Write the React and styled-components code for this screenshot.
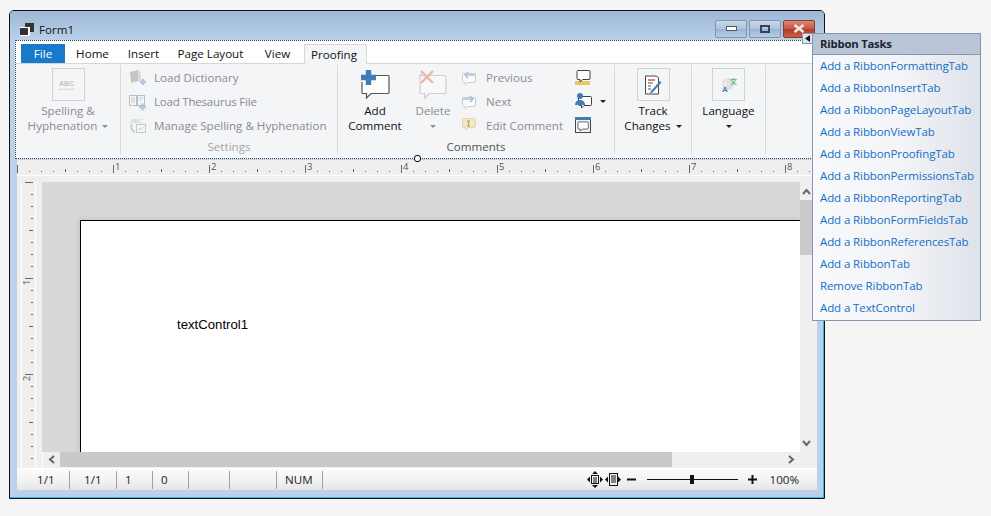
import React from "react";
import styled, { createGlobalStyle } from "styled-components";

const GlobalStyle = createGlobalStyle`
  html, body { margin: 0; padding: 0; background: #f5f5f5; }
  body { width: 991px; height: 516px; overflow: hidden; font-family: "Open Sans", "Liberation Sans", sans-serif; }
`;

const Screen = styled.div`
  position: relative;
  width: 991px;
  height: 516px;
  padding: 10px 0 0 9px;
  box-sizing: border-box;
`;

const Win = styled.div`
  width: 816px;
  height: 489px;
  box-sizing: border-box;
  border: 1px solid #111;
  border-radius: 5px 5px 0 0;
  background: #b9d1ea;
  box-shadow: inset -1px -1px 0 #35b5d8;
  padding: 0 7px 8px 7px;
  display: flex;
  flex-direction: column;
`;

const TitleBar = styled.div`
  height: 29px;
  flex: none;
  box-sizing: border-box;
  margin: 0 -7px;
  padding: 8px 9px 0 10px;
  border-radius: 4px 4px 0 0;
  background: linear-gradient(#9cb7d5, #b9d1ea);
  display: flex;
  align-items: center;
  font-size: 11.6px;
  color: #111;
`;

const TitleText = styled.span`
  margin-left: 5px;
`;

const WinButtons = styled.div`
  margin-left: auto;
  margin-top: -2px;
  display: flex;
  gap: 2px;
`;

const WinButton = styled.div`
  width: 32px;
  height: 18px;
  box-sizing: border-box;
  border: 1px solid ${p => (p.$close ? "#8a3a2c" : "#7f93ad")};
  border-radius: 2px;
  background: ${p =>
    p.$close
      ? "linear-gradient(#d98a78, #c45a45 48%, #b23a28 52%, #c9604a)"
      : "linear-gradient(#c9d8e9, #afc4dc 48%, #9bb4d1 52%, #b8cde4)"};
  display: flex;
  align-items: center;
  justify-content: center;
`;

const RibbonBox = styled.div`
  height: 119px;
  flex: none;
  box-sizing: border-box;
  margin-left: -2px;
  border-top: 1px dotted #444;
  border-left: 1px dotted #444;
  border-bottom: 1px dotted #444;
  background: #f4f5f7;
  display: flex;
  flex-direction: column;
  position: relative;
`;

const TabStrip = styled.div`
  height: 23px;
  flex: none;
  box-sizing: border-box;
  padding: 3px 0 0 5px;
  background: #fff;
  border-bottom: 1px solid #d6d6d6;
  display: flex;
  font-size: 11.6px;
  color: #111;
`;

const Tab = styled.div`
  height: ${p => (p.$active ? 20 : 19)}px;
  width: ${p => p.$w}px;
  box-sizing: border-box;
  margin-left: ${p => (p.$active ? 3 : 0)}px;
  padding-right: ${p => (p.$active ? 3 : 0)}px;
  display: flex;
  align-items: center;
  justify-content: center;
  background: ${p => (p.$file ? "#1979ca" : p.$active ? "#f4f5f7" : "#fff")};
  color: ${p => (p.$file ? "#fff" : "#111")};
  border: ${p => (p.$active ? "1px solid #d6d6d6" : "none")};
  border-bottom: none;
`;

const Groups = styled.div`
  flex: 1;
  display: flex;
  padding-top: 1px;
`;

const Group = styled.div`
  width: ${p => p.$w}px;
  height: 89px;
  box-sizing: border-box;
  border-right: 1px solid #d9d9d9;
  flex: none;
  display: flex;
  flex-direction: column;
`;

const GroupBody = styled.div`
  height: 72px;
  flex: none;
  display: flex;
`;

const GroupLabel = styled.div`
  text-align: center;
  font-size: 11.6px;
  line-height: 14px;
  color: ${p => (p.$off ? "#a6a6a6" : "#555")};
  margin-top: 3px;
`;

const BigButton = styled.div`
  width: ${p => p.$w}px;
  flex: none;
  padding-top: 3px;
  display: flex;
  flex-direction: column;
  align-items: center;
  font-size: 11.6px;
  line-height: 15px;
  text-align: center;
  color: ${p => (p.$off ? "#8b8b94" : "#111")};
`;

const IconFrame = styled.div`
  width: 33px;
  height: 33px;
  box-sizing: border-box;
  border: ${p => (p.$plain ? "none" : "1px solid #d2d2d2")};
  margin-bottom: 2px;
  display: flex;
  align-items: center;
  justify-content: center;
  flex: none;
`;

const Caret = styled.span`
  display: inline-block;
  width: 0;
  height: 0;
  border-left: 3px solid transparent;
  border-right: 3px solid transparent;
  border-top: 3px solid ${p => (p.$off ? "#8b8b94" : "#222")};
  vertical-align: middle;
  margin-left: ${p => p.$gap ?? 5}px;
`;

const SmallList = styled.div`
  display: flex;
  flex-direction: column;
  padding-top: ${p => p.$top ?? 1}px;
  margin-left: ${p => p.$left}px;
`;

const SmallRow = styled.div`
  height: 24px;
  display: flex;
  align-items: center;
  font-size: 11.6px;
  letter-spacing: ${p => p.$track ?? 0}px;
  color: #8b8b94;
  white-space: nowrap;
`;

const SmallIcon = styled.div`
  width: 25px;
  height: 18px;
  flex: none;
  display: flex;
  align-items: center;
`;

const RulerBar = styled.div`
  height: 16px;
  flex: none;
  margin-top: 1px;
  background: #efefef;
  border-bottom: 1px solid #fff;
  box-sizing: border-box;
  line-height: 0;
`;

const Body = styled.div`
  height: 293px;
  flex: none;
  background: #efefef;
  display: flex;
  padding: 6px 0 0 4px;
  box-sizing: border-box;
  border-bottom: 1px solid #fff;
`;

const VRuler = styled.div`
  width: 15px;
  box-sizing: border-box;
  border-left: 1px solid #fff;
  border-right: 1px solid #fff;
  flex: none;
  line-height: 0;
  margin-right: 6px;
`;

const DocGrid = styled.div`
  width: 775px;
  display: grid;
  grid-template-columns: 758px 17px;
  grid-template-rows: 270px 16px;
`;

const DocArea = styled.div`
  background: #d8d8d8;
  padding: 38px 0 0 38px;
  overflow: hidden;
`;

const Sheet = styled.div`
  height: 100%;
  background: #fff;
  box-sizing: border-box;
  border-top: 1px solid #000;
  border-left: 1px solid #000;
  box-shadow: -2px -2px 4px rgba(0, 0, 0, 0.08);
  padding: 96px 0 0 96px;
  font-family: "Liberation Sans", Arial, sans-serif;
  font-size: 13.2px;
  line-height: 15px;
  color: #000;
`;

const VScroll = styled.div`
  background: #efefef;
  display: flex;
  flex-direction: column;
  align-items: flex-start;
`;

const VThumb = styled.div`
  width: 13px;
  height: 55px;
  background: #cbcbcb;
`;

const ArrowCell = styled.div`
  height: ${p => p.$h}px;
  width: ${p => p.$w}px;
  flex: none;
  display: flex;
  align-items: center;
  justify-content: center;
`;

const VGap = styled.div`
  flex: 1;
`;

const HScroll = styled.div`
  background: #efefef;
  display: flex;
  align-items: stretch;
  padding-left: 1px;
  box-shadow: inset 1px 0 0 #fff;
`;

const HThumb = styled.div`
  width: 612px;
  height: 15px;
  background: #c9c9c9;
`;

const Corner = styled.div`
  background: #efefef;
`;

const StatusBar = styled.div`
  height: 21px;
  flex: none;
  background: linear-gradient(#fbfbfb, #f3f3f3 50%, #e6e6e6);
  display: flex;
  align-items: center;
  font-size: 11.6px;
  color: #222;
`;

const StatusCell = styled.div`
  width: ${p => p.$w}px;
  height: 18px;
  box-sizing: border-box;
  flex: none;
  padding-left: ${p => p.$pad}px;
  border-right: 1px solid #a0a0a0;
  line-height: 18px;
`;

const StatusRight = styled.div`
  margin-left: auto;
  padding-right: 18px;
  display: flex;
  align-items: center;
`;

const Zoom = styled.span`
  margin-left: 13px;
`;

const Slider = styled.div`
  width: 91px;
  height: 1px;
  margin: 0 10px 0 11px;
  background: #111;
  position: relative;
`;

const SliderThumb = styled.div`
  position: absolute;
  left: 43px;
  top: -4px;
  width: 4px;
  height: 9px;
  background: #111;
`;

const MinusIcon = styled.svg`
  margin-left: 6px;
`;

const SizeHandle = styled.div`
  position: absolute;
  left: 398px;
  bottom: -4px;
  width: 7px;
  height: 7px;
  box-sizing: border-box;
  border: 1px solid #000;
  border-radius: 3px;
  background: #fff;
`;

const SmartTag = styled.div`
  position: absolute;
  left: 802px;
  top: 33px;
  width: 11px;
  height: 11px;
  box-sizing: border-box;
  background: #dfe3ea;
  border: 1px solid #8496b0;
  display: flex;
  align-items: center;
  justify-content: center;
`;

const TasksPanel = styled.div`
  position: absolute;
  left: 812px;
  top: 33px;
  width: 169px;
  height: 288px;
  box-sizing: border-box;
  border: 1px solid #8496b0;
  background: linear-gradient(90deg, #f8f9fb, #f4f5f8 50%, #dee2e9);
`;

const TasksHeader = styled.div`
  height: 21px;
  box-sizing: border-box;
  background: #b9c5d7;
  border-bottom: 1px solid #8496b0;
  padding-left: 7px;
  font-size: 11.3px;
  letter-spacing: -0.2px;
  font-weight: 700;
  line-height: 20px;
  color: #1c2433;
`;

const TasksList = styled.div`
  padding: 0 0 0 7px;
  display: flex;
  flex-direction: column;
`;

const TaskLink = styled.a`
  height: 22px;
  font-size: 11.5px;
  letter-spacing: -0.1px;
  line-height: 21px;
  color: #126fc8;
  white-space: nowrap;
`;

const Frame = ({ children, w = 24, h = 24, ...rest }) => (
  <svg width={w} height={h} viewBox={`0 0 ${w} ${h}`} fill="none" {...rest}>
    {children}
  </svg>
);

const Bubble = ({ c = "#444", fill = "#fff" }) => (
  <path
    d="M1.500 0.500h11a1 1 0 0 1 1 1v7a1 1 0 0 1-1 1H6l-2.500 2.500v-2.500H1.500a1 1 0 0 1-1-1v-7a1 1 0 0 1 1-1z"
    stroke={c}
    fill={fill}
  />
);

const WindowIcon = () => (
  <Frame w={14} h={13}>
    <rect x="5" y="0" width="9" height="9" fill="#333" />
    <rect x="0" y="4" width="10" height="9" fill="#fff" />
    <rect x="0" y="5" width="8" height="7" fill="#333" />
  </Frame>
);

const AbcIcon = () => (
  <Frame w={20} h={14}>
    <text x="1" y="8" fontFamily="Liberation Sans" fontWeight="700" fontSize="7" fill="#c4c4c4">ABC</text>
    <path d="M1 12l2-1.500 2 1.500 2-1.500 2 1.500 2-1.500 2 1.500 2-1.500 2 1.500" stroke="#e9bdb5" strokeWidth="0.8" />
  </Frame>
);

const DictIcon = () => (
  <Frame w={18} h={18}>
    <path d="M1 3l8-2v11l-7 2z" fill="#c6c6c6" />
    <path d="M9 1l3 2v9l-3 1z" fill="#dcdcdc" />
    <path d="M11 13h6M14 10v6" stroke="#aec6de" strokeWidth="2.400" />
  </Frame>
);

const ThesaurusIcon = () => (
  <Frame w={18} h={18}>
    <rect x="0.500" y="2.500" width="7" height="10" stroke="#bdbdbd" />
    <rect x="8.500" y="2.500" width="7" height="10" stroke="#bdbdbd" />
    <path d="M2 5h4M2 7h4M2 9h4M10 5h4M10 7h2" stroke="#c9c9c9" />
    <path d="M10 14h7M13.500 10.500v7" stroke="#aec6de" strokeWidth="2.400" />
  </Frame>
);

const ManageIcon = () => (
  <Frame w={18} h={18}>
    <text x="1" y="7" fontFamily="Liberation Sans" fontSize="6" fill="#c9c9c9">ABC</text>
    <path d="M3 8c-2 3 0 7 3 8" stroke="#cfcfcf" strokeWidth="2" />
    <rect x="7.500" y="8.500" width="9" height="8" stroke="#b6d4b6" fill="#f4f7f4" />
    <path d="M9.500 12l2 2 3-3" stroke="#b6d4b6" />
  </Frame>
);

const AddCommentIcon = () => (
  <Frame w={30} h={30}>
    <path
      d="M6 5.500h22a1 1 0 0 1 1 1v16a1 1 0 0 1-1 1H11l-4.500 4.500v-4.500H3a1 1 0 0 1-1-1V12"
      stroke="#555"
      fill="#fff"
      strokeWidth="1.200"
    />
    <path d="M1 7.500h15M8.500 0v15" stroke="#3f7cb8" strokeWidth="5.400" />
  </Frame>
);

const DeleteCommentIcon = () => (
  <Frame w={30} h={30}>
    <path
      d="M3 5.500h24a1 1 0 0 1 1 1v16a1 1 0 0 1-1 1H11l-4.500 4.500v-4.500H3a1 1 0 0 1-1-1v-17a1 1 0 0 1 1-1z"
      stroke="#cfcfcf"
      fill="#f8f8f8"
      strokeWidth="1.200"
    />
    <path d="M3 1l12 12M15 1L3 13" stroke="#eeb3a8" strokeWidth="2.400" />
  </Frame>
);

const PrevIcon = ({ flip }) => (
  <Frame w={16} h={16}>
    <g transform="translate(1 3)">
      <Bubble c="#c9c9c9" fill="#fafafa" />
    </g>
    <path d={flip ? "M2 5h10M9 2l3 3-3 3" : "M14 5H4M7 2L4 5l3 3"} stroke="#a8c3de" strokeWidth="1.600" />
  </Frame>
);

const EditCommentIcon = () => (
  <Frame w={16} h={16}>
    <g transform="translate(1 1)">
      <Bubble c="#e3d5b0" fill="#f3e6c2" />
    </g>
    <path d="M6 4h3M7.500 4v5M6 9h3" stroke="#a99a70" />
  </Frame>
);

const ShowIcon = () => (
  <Frame w={16} h={15}>
    <rect x="0" y="11" width="15" height="4" fill="#eec468" />
    <g transform="translate(1.500 0)">
      <Bubble />
    </g>
  </Frame>
);

const AuthorIcon = () => (
  <Frame w={17} h={16}>
    <g transform="translate(3 3)">
      <Bubble />
    </g>
    <circle cx="5" cy="3" r="3" fill="#3f7cb8" />
    <path d="M0 12c0-3 2-5 5-5s5 2 5 5z" fill="#3f7cb8" />
  </Frame>
);

const PaneIcon = () => (
  <Frame w={16} h={16}>
    <rect x="0.500" y="1" width="15" height="14.500" stroke="#444" />
    <rect x="0" y="0" width="16" height="3" fill="#3f7cb8" />
    <g transform="translate(2.500 4.500) scale(0.8)">
      <Bubble />
    </g>
  </Frame>
);

const TrackIcon = () => (
  <Frame w={18} h={20}>
    <path d="M1.500 1h11l2 2v16h-13z" stroke="#444" fill="#fff" />
    <path d="M4 5h7" stroke="#d0503c" strokeWidth="1.400" />
    <path d="M4 8h5M4 11h3M4 14h3" stroke="#555" />
    <path d="M7 16l9-10 1.500 1.500-9 10-2.500 1z" fill="#3f7cb8" />
  </Frame>
);

const LanguageIcon = () => (
  <Frame w={20} h={20}>
    <circle cx="9" cy="9" r="6" fill="#dedede" />
    <path d="M8 3c-2 4-2 8 0 12M3 9h12" stroke="#f2f2f2" />
    <text x="3" y="17" fontFamily="Liberation Sans" fontWeight="700" fontSize="8" fill="#3f7cb8">A</text>
    <text x="11" y="9" fontFamily="Noto Sans CJK SC" fontWeight="700" fontSize="7" fill="#55b865">文</text>
  </Frame>
);

const Chevron = ({ d }) => (
  <Frame w={9} h={7}>
    <path d={d} stroke="#666" strokeWidth="2" />
  </Frame>
);

const HRuler = () => {
  const ticks = [];
  for (let i = 0; i <= 66; i++) {
    const x = i * 12 + 0.5;
    if (i % 8 === 0) ticks.push(<path key={i} d={`M${x} 5V13`} stroke="#666" />);
    else if (i % 4 === 0) ticks.push(<path key={i} d={`M${x} 9V12`} stroke="#666" />);
    else ticks.push(<path key={i} d={`M${x} 11V12`} stroke="#666" />);
  }
  const labels = [1, 2, 3, 4, 5, 6, 7, 8].map(n => (
    <text key={n} x={n * 96 + 2} y="10.200" fontSize="9.500" fontFamily="Open Sans" fill="#555">{n}</text>
  ));
  return (
    <svg width="800" height="15">
      {ticks}
      {labels}
    </svg>
  );
};

const VRulerDrawing = () => {
  const ticks = [];
  for (let i = 0; i <= 23; i++) {
    const y = i * 12 + 0.5;
    if (i % 8 === 0) ticks.push(<path key={i} d={`M3 ${y}H11`} stroke="#666" />);
    else if (i % 4 === 0) ticks.push(<path key={i} d={`M7 ${y}H11`} stroke="#666" />);
    else ticks.push(<path key={i} d={`M9 ${y}H11`} stroke="#666" />);
  }
  const labels = [1, 2].map(n => (
    <text
      key={n}
      transform={`translate(8 ${n * 96 + 7}) rotate(-90)`}
      fontSize="9"
      fontFamily="Open Sans"
      fill="#555"
    >
      {n}
    </text>
  ));
  return (
    <svg width="13" height="286">
      {ticks}
      {labels}
    </svg>
  );
};

const ViewIcons = () => (
  <Frame w={34} h={17}>
    <path d="M0 8.500l3-3v6zM16 8.500l-3-3v6zM8 0l-3 3h6zM8 17l-3-3h6zM18 8.500l3-3v6zM34 8.500l-3-3v6z" fill="#111" />
    <rect x="4.500" y="4.500" width="7" height="8" stroke="#111" />
    <path d="M6 7h4M6 9h4M6 11h4" stroke="#111" />
    <rect x="22.500" y="2.500" width="8" height="12" stroke="#111" />
    <path d="M24 5h5M24 7h5M24 9h5M24 11h5" stroke="#111" />
  </Frame>
);

const taskLinks = [
  "Add a RibbonFormattingTab",
  "Add a RibbonInsertTab",
  "Add a RibbonPageLayoutTab",
  "Add a RibbonViewTab",
  "Add a RibbonProofingTab",
  "Add a RibbonPermissionsTab",
  "Add a RibbonReportingTab",
  "Add a RibbonFormFieldsTab",
  "Add a RibbonReferencesTab",
  "Add a RibbonTab",
  "Remove RibbonTab",
  "Add a TextControl",
];

const statusCells = [
  { w: 53, pad: 20, text: "1/1" },
  { w: 47, pad: 14, text: "1/1" },
  { w: 36, pad: 8, text: "1" },
  { w: 36, pad: 8, text: "0" },
  { w: 41, pad: 0, text: "" },
  { w: 47, pad: 0, text: "" },
  { w: 46, pad: 8, text: "NUM" },
];

export default function App() {
  return (
    <Screen>
      <GlobalStyle />
      <Win>
        <TitleBar>
          <WindowIcon />
          <TitleText>Form1</TitleText>
          <WinButtons>
            <WinButton>
              <Frame w={11} h={5}>
                <rect x="0.500" y="0.500" width="10" height="4" fill="#fff" stroke="#4b5b70" />
              </Frame>
            </WinButton>
            <WinButton>
              <Frame w={10} h={8}>
                <rect x="1" y="1" width="8" height="6" fill="none" stroke="#33445a" strokeWidth="2" />
              </Frame>
            </WinButton>
            <WinButton $close>
              <Frame w={12} h={9}>
                <path d="M1.500 1l9 7M10.500 1l-9 7" stroke="#f1e6e3" strokeWidth="2.600" />
              </Frame>
            </WinButton>
          </WinButtons>
        </TitleBar>

        <RibbonBox>
          <TabStrip>
            <Tab $w={44} $file>File</Tab>
            <Tab $w={55}>Home</Tab>
            <Tab $w={47}>Insert</Tab>
            <Tab $w={87}>Page Layout</Tab>
            <Tab $w={47}>View</Tab>
            <Tab $w={63} $active>Proofing</Tab>
          </TabStrip>
          <Groups>
            <Group $w={105}>
              <GroupBody>
                <BigButton $w={104} $off>
                  <IconFrame><AbcIcon /></IconFrame>
                  <div>Spelling &amp;</div>
                  <div>Hyphenation<Caret $off /></div>
                </BigButton>
              </GroupBody>
            </Group>
            <Group $w={217}>
              <GroupBody>
                <SmallList $left={8}>
                  <SmallRow><SmallIcon><DictIcon /></SmallIcon>Load Dictionary</SmallRow>
                  <SmallRow $track={-0.25}><SmallIcon><ThesaurusIcon /></SmallIcon>Load Thesaurus File</SmallRow>
                  <SmallRow><SmallIcon><ManageIcon /></SmallIcon>Manage Spelling &amp; Hyphenation</SmallRow>
                </SmallList>
              </GroupBody>
              <GroupLabel $off>Settings</GroupLabel>
            </Group>
            <Group $w={277}>
              <GroupBody>
                <BigButton $w={74}>
                  <IconFrame $plain><AddCommentIcon /></IconFrame>
                  <div>Add</div>
                  <div>Comment</div>
                </BigButton>
                <BigButton $w={42} $off>
                  <IconFrame $plain><DeleteCommentIcon /></IconFrame>
                  <div>Delete</div>
                  <div><Caret $off $gap={0} /></div>
                </BigButton>
                <SmallList $left={7}>
                  <SmallRow><SmallIcon><PrevIcon /></SmallIcon>Previous</SmallRow>
                  <SmallRow><SmallIcon><PrevIcon flip /></SmallIcon>Next</SmallRow>
                  <SmallRow><SmallIcon><EditCommentIcon /></SmallIcon>Edit Comment</SmallRow>
                </SmallList>
                <SmallList $left={12} $top={0}>
                  <SmallRow><ShowIcon /></SmallRow>
                  <SmallRow><AuthorIcon /><Caret $gap={8} /></SmallRow>
                  <SmallRow><PaneIcon /></SmallRow>
                </SmallList>
              </GroupBody>
              <GroupLabel>Comments</GroupLabel>
            </Group>
            <Group $w={77}>
              <GroupBody>
                <BigButton $w={76}>
                  <IconFrame><TrackIcon /></IconFrame>
                  <div>Track</div>
                  <div>Changes<Caret /></div>
                </BigButton>
              </GroupBody>
            </Group>
            <Group $w={74}>
              <GroupBody>
                <BigButton $w={73}>
                  <IconFrame><LanguageIcon /></IconFrame>
                  <div>Language</div>
                  <div><Caret $gap={0} /></div>
                </BigButton>
              </GroupBody>
            </Group>
          </Groups>
          <SizeHandle />
        </RibbonBox>

        <RulerBar><HRuler /></RulerBar>

        <Body>
          <VRuler><VRulerDrawing /></VRuler>
          <DocGrid>
            <DocArea>
              <Sheet>textControl1</Sheet>
            </DocArea>
            <VScroll>
              <ArrowCell $h={18} $w={13}>
                <Chevron d="M1 6l3.500-4 3.500 4" />
              </ArrowCell>
              <VThumb />
              <VGap />
              <ArrowCell $h={18} $w={13}>
                <Chevron d="M1 1l3.500 4 3.500-4" />
              </ArrowCell>
            </VScroll>
            <HScroll>
              <ArrowCell $h={15} $w={17}>
                <svg width="7" height="9" fill="none"><path d="M6 1L2 4.500 6 8" stroke="#666" strokeWidth="2" /></svg>
              </ArrowCell>
              <HThumb />
              <VGap />
              <ArrowCell $h={15} $w={17}>
                <svg width="7" height="9" fill="none"><path d="M1 1l4 3.500L1 8" stroke="#666" strokeWidth="2" /></svg>
              </ArrowCell>
            </HScroll>
            <Corner />
          </DocGrid>
        </Body>

        <StatusBar>
          {statusCells.map((c, i) => (
            <StatusCell key={i} $w={c.w} $pad={c.pad}>{c.text}</StatusCell>
          ))}
          <StatusRight>
            <ViewIcons />
            <MinusIcon width="9" height="3"><rect width="9" height="2" y="0.500" fill="#111" /></MinusIcon>
            <Slider><SliderThumb /></Slider>
            <svg width="9" height="9"><path d="M0 4.500h9M4.500 0v9" stroke="#111" strokeWidth="2" /></svg>
            <Zoom>100%</Zoom>
          </StatusRight>
        </StatusBar>
      </Win>

      <SmartTag>
        <svg width="5" height="7"><path d="M5 0v7L0 3.500z" fill="#111" /></svg>
      </SmartTag>

      <TasksPanel>
        <TasksHeader>Ribbon Tasks</TasksHeader>
        <TasksList>
          {taskLinks.map(t => (
            <TaskLink key={t}>{t}</TaskLink>
          ))}
        </TasksList>
      </TasksPanel>
    </Screen>
  );
}
